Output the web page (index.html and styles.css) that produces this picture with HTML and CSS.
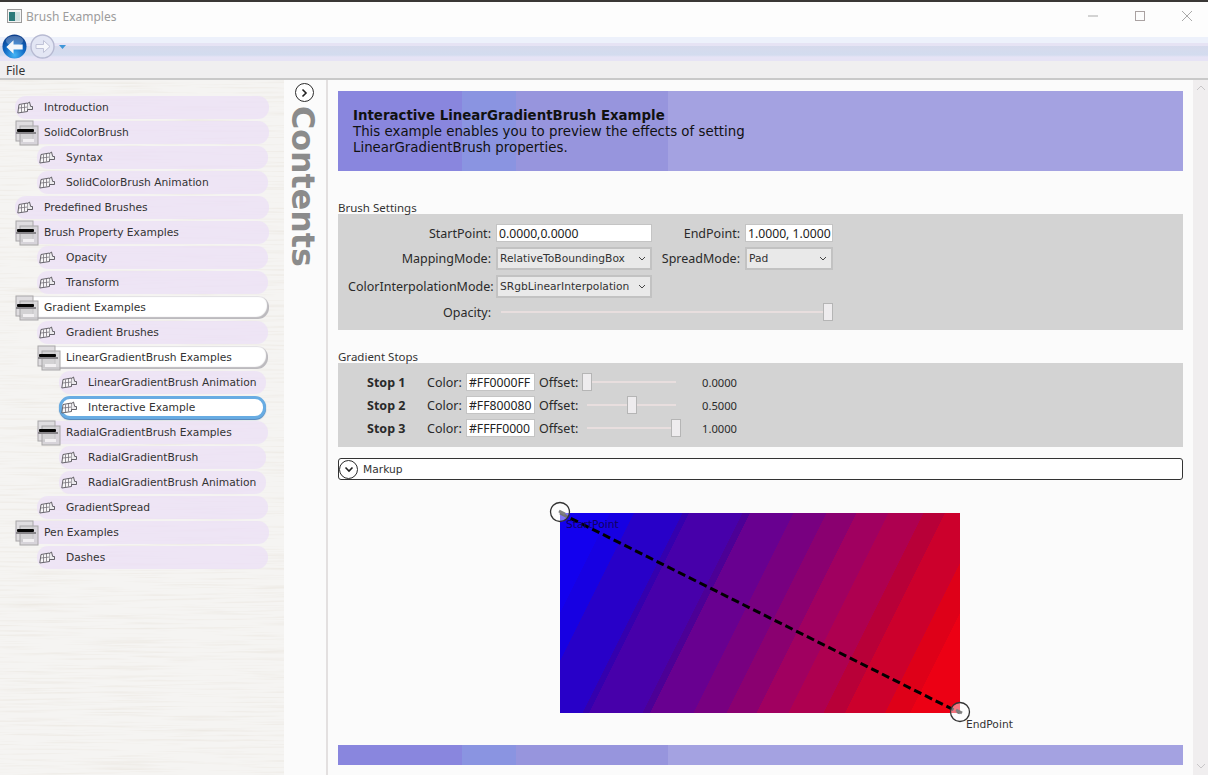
FILE: index.html
```html
<!DOCTYPE html>
<html lang="en">
<head>
    <meta charset="UTF-8">
    <meta name="viewport" content="width=device-width, initial-scale=1.0">
    <title>Brush Examples</title>
    <link rel="stylesheet" href="styles.css">
</head>
<body>
    <svg class="defs" width="0" height="0">
        <defs>
            <symbol id="book" viewBox="0 0 16 13">
                <path d="M2 3.500L10.500 2V10.500L.8 12z" fill="#f7f5f7" stroke="#56535a" stroke-width=".9"/>
                <path d="M4.500 3.500v7.500M7.500 3v7.500M2 7l8.500-1" fill="none" stroke="#77747b" stroke-width=".8"/>
                <path d="M10.500 2.500L12.500 1l1.200 4.500h1.800V8.500h-5" fill="#ecebee" stroke="#56535a" stroke-width=".9"/>
            </symbol>
            <symbol id="folder" viewBox="0 0 24 26">
                <rect x="1" y="1" width="17" height="20" fill="#dfdde0" stroke="#a8a6a8"/>
                <rect x="5" y="6" width="18" height="19" fill="#cfcdd0" fill-opacity=".75" stroke="#a8a6a8"/>
                <rect x="8" y="19" width="11" height="3" fill="#f2f0f2"/>
                <rect x="2" y="9" width="17" height="3" rx="1" fill="#050505"/>
                <rect x="1" y="12" width="20" height="2" fill="#88868a"/>
            </symbol>
        </defs>
    </svg>

    <header class="titlebar">
        <svg class="app-icon" width="15" height="14" viewBox="0 0 15 14">
            <rect x=".5" y=".5" width="14" height="13" fill="#f4f4f4" stroke="#9a9a9a"/>
            <rect x="2" y="3" width="6" height="9" fill="#2b7a7a"/>
            <rect x="8" y="3" width="5" height="9" fill="#cfe0e0"/>
        </svg>
        <span class="app-title">Brush Examples</span>
        <div class="window-buttons">
            <svg width="12" height="12" viewBox="0 0 12 12"><path d="M1 6h10" stroke="#a9a9a9"/></svg>
            <svg width="12" height="12" viewBox="0 0 12 12"><rect x="1.500" y="1.500" width="9" height="9" fill="none" stroke="#aaa2a2"/></svg>
            <svg width="12" height="12" viewBox="0 0 12 12"><path d="M1 1l10 10M11 1L1 11" stroke="#a9a9a9"/></svg>
        </div>
    </header>

    <nav class="navbar">
        <button class="nav-btn nav-back">
            <svg width="25" height="25" viewBox="0 0 26 26">
                <defs>
                    <radialGradient id="backFill" cx=".5" cy=".85" r=".8">
                        <stop offset="0" stop-color="#45b6f6"/>
                        <stop offset=".55" stop-color="#0f68c4"/>
                        <stop offset="1" stop-color="#0d3f8c"/>
                    </radialGradient>
                </defs>
                <circle cx="13" cy="13" r="12.500" fill="url(#backFill)"/>
                <ellipse cx="13" cy="7" rx="9" ry="5" fill="#fff" fill-opacity=".25"/>
                <path d="M4.500 13.500L12 6.500v4.500h9.500v5H12v4.500z" fill="#f6f7fa"/>
            </svg>
        </button>
        <button class="nav-btn nav-forward">
            <svg width="25" height="25" viewBox="0 0 25 25">
                <circle cx="12.500" cy="12.500" r="11.500" fill="#e3e6f4" stroke="#b7bad2" stroke-width="1.400"/>
                <path d="M20 12.500l-6.500-6v4H6v4h7.500v4z" fill="#f6f7fb" stroke="#c0c3d8"/>
            </svg>
        </button>
        <svg class="nav-drop" width="7" height="4" viewBox="0 0 7 4"><path d="M0 0h7L3.500 4z" fill="#3f97d8"/></svg>
    </nav>

    <div class="menubar">File</div>

    <main class="workspace">
        <aside class="sidebar">
            <svg class="grain" width="284" height="695">
                <filter id="grainFilter" x="0" y="0" width="100%" height="100%">
                    <feTurbulence type="fractalNoise" baseFrequency="0.012 0.42" numOctaves="3" seed="11"/>
                    <feColorMatrix values="0 0 0 0 .80  0 0 0 0 .76  0 0 0 0 .70  1.300 0 0 0 -.62"/>
                </filter>
                <rect width="284" height="695" filter="url(#grainFilter)"/>
            </svg>
            <ul class="tree">
                <li class="node"><svg class="ico-book"><use href="#book"/></svg>Introduction</li>
                <li class="node"><svg class="ico-folder"><use href="#folder"/></svg>SolidColorBrush</li>
                <li class="node lvl1"><svg class="ico-book"><use href="#book"/></svg>Syntax</li>
                <li class="node lvl1"><svg class="ico-book"><use href="#book"/></svg>SolidColorBrush Animation</li>
                <li class="node"><svg class="ico-book"><use href="#book"/></svg>Predefined Brushes</li>
                <li class="node"><svg class="ico-folder"><use href="#folder"/></svg>Brush Property Examples</li>
                <li class="node lvl1"><svg class="ico-book"><use href="#book"/></svg>Opacity</li>
                <li class="node lvl1"><svg class="ico-book"><use href="#book"/></svg>Transform</li>
                <li class="node open"><svg class="ico-folder"><use href="#folder"/></svg>Gradient Examples</li>
                <li class="node lvl1"><svg class="ico-book"><use href="#book"/></svg>Gradient Brushes</li>
                <li class="node lvl1 open"><svg class="ico-folder"><use href="#folder"/></svg>LinearGradientBrush Examples</li>
                <li class="node lvl2"><svg class="ico-book"><use href="#book"/></svg>LinearGradientBrush Animation</li>
                <li class="node lvl2 selected"><svg class="ico-book"><use href="#book"/></svg>Interactive Example</li>
                <li class="node lvl1"><svg class="ico-folder"><use href="#folder"/></svg>RadialGradientBrush Examples</li>
                <li class="node lvl2"><svg class="ico-book"><use href="#book"/></svg>RadialGradientBrush</li>
                <li class="node lvl2"><svg class="ico-book"><use href="#book"/></svg>RadialGradientBrush Animation</li>
                <li class="node lvl1"><svg class="ico-book"><use href="#book"/></svg>GradientSpread</li>
                <li class="node"><svg class="ico-folder"><use href="#folder"/></svg>Pen Examples</li>
                <li class="node lvl1"><svg class="ico-book"><use href="#book"/></svg>Dashes</li>
            </ul>
        </aside>

        <div class="contents-strip">
            <button class="round-btn">
                <svg width="10" height="10" viewBox="0 0 10 10"><path d="M3.500 1.500L7 5L3.500 8.500" fill="none" stroke="#222" stroke-width="1.600"/></svg>
            </button>
            <div class="contents-label">Contents</div>
        </div>

        <section class="content">
            <div class="banner">
                <h1>Interactive LinearGradientBrush Example</h1>
                <p>This example enables you to preview the effects of setting<br>LinearGradientBrush properties.</p>
            </div>

            <h2 class="group-title first">Brush Settings</h2>
            <div class="panel settings">
                <label>StartPoint:</label>
                <input class="field" type="text" value="0.0000,0.0000">
                <label>EndPoint:</label>
                <input class="field" type="text" value="1.0000, 1.0000">

                <label>MappingMode:</label>
                <div class="combo">RelativeToBoundingBox<svg width="8" height="5" viewBox="0 0 8 5"><path d="M1 1l3 3 3-3" fill="none" stroke="#444"/></svg></div>
                <label>SpreadMode:</label>
                <div class="combo">Pad<svg width="8" height="5" viewBox="0 0 8 5"><path d="M1 1l3 3 3-3" fill="none" stroke="#444"/></svg></div>

                <label>ColorInterpolationMode:</label>
                <div class="combo">SRgbLinearInterpolation<svg width="8" height="5" viewBox="0 0 8 5"><path d="M1 1l3 3 3-3" fill="none" stroke="#444"/></svg></div>
                <span></span>
                <span></span>

                <label>Opacity:</label>
                <input class="slider opacity" type="range" min="0" max="1" step="0.01" value="1">
            </div>

            <h2 class="group-title second">Gradient Stops</h2>
            <div class="panel stops">
                <b>Stop 1</b><span>Color:</span><input class="field" type="text" value="#FF0000FF"><span>Offset:</span>
                <input class="slider" type="range" min="0" max="1" step="0.01" value="0"><span class="num">0.0000</span>
                <b>Stop 2</b><span>Color:</span><input class="field" type="text" value="#FF800080"><span>Offset:</span>
                <input class="slider" type="range" min="0" max="1" step="0.01" value="0.5"><span class="num">0.5000</span>
                <b>Stop 3</b><span>Color:</span><input class="field" type="text" value="#FFFF0000"><span>Offset:</span>
                <input class="slider" type="range" min="0" max="1" step="0.01" value="1"><span class="num">1.0000</span>
            </div>

            <div class="expander">
                <button class="round-btn">
                    <svg width="10" height="10" viewBox="0 0 10 10"><path d="M1.500 3.500L5 7L8.500 3.500" fill="none" stroke="#222" stroke-width="1.600"/></svg>
                </button>
                <span>Markup</span>
            </div>

            <div class="canvas">
                <div class="gradient-rect"></div>
                <svg class="overlay" width="844" height="265">
                    <line x1="222" y1="33" x2="622" y2="233" stroke="#000" stroke-width="3" stroke-dasharray="8 4"/>
                    <circle cx="222" cy="32" r="9.500" fill="#fff" fill-opacity=".45" stroke="#333" stroke-width="1.300"/>
                    <circle cx="622" cy="232" r="9.500" fill="#fff" fill-opacity=".45" stroke="#333" stroke-width="1.300"/>
                    <line x1="221" y1="31" x2="227" y2="34" stroke="#808080" stroke-width="3"/>
                    <line x1="618" y1="230" x2="624" y2="233" stroke="#808080" stroke-width="3"/>
                </svg>
                <span class="point-label start">StartPoint</span>
                <span class="point-label end">EndPoint</span>
            </div>

            <div class="banner footer-bar"></div>
        </section>

        <div class="scrollbar">
            <svg width="10" height="6" viewBox="0 0 10 6"><path d="M1 5l4-4 4 4" fill="none" stroke="#c9c7c9"/></svg>
            <svg width="10" height="6" viewBox="0 0 10 6"><path d="M1 1l4 4 4-4" fill="none" stroke="#c9c7c9"/></svg>
        </div>
    </main>
</body>
</html>
```

FILE: styles.css
```css
* {
    box-sizing: border-box;
}
html, body {
    height: 100%;
}
body {
    margin: 0;
    display: flex;
    flex-direction: column;
    height: 775px;
    overflow: hidden;
    background-color: #fbfbfb;
    font-family: "Noto Sans", sans-serif;
    font-size: 12px;
    color: #222;
}
button {
    padding: 0;
    border: none;
    background: none;
}
.defs {
    position: absolute;
}

/* title bar */
.titlebar {
    height: 37px;
    flex: none;
    display: flex;
    align-items: center;
    padding: 0 15px 7px 7px;
    background-color: #fdfdfd;
    border-top: 2px solid #3a3836;
}
.app-title {
    margin-left: 4px;
    color: #9c9c9c;
}
.window-buttons {
    margin-left: auto;
    display: flex;
    gap: 35px;
}

/* back and forward */
.navbar {
    height: 24px;
    flex: none;
    display: flex;
    align-items: center;
    padding-left: 2px;
    background: linear-gradient(#edf1fb 0, #edf1fb 6px, #e6e3f4 6px, #e6e3f4 9px, #d6daec 9px, #d3dcef 18px, #e6e3f5 20px);
}
.nav-btn {
    display: flex;
    margin-top: -5px;
}
.nav-back {
    margin-right: 3px;
}
.nav-drop {
    margin-left: 4px;
    margin-top: -4px;
}
.menubar {
    height: 19px;
    flex: none;
    padding: 0 6px;
    line-height: 19px;
    background-color: #f0eff0;
    border-bottom: 2px solid #c9c9c9;
    color: #333;
}

.workspace {
    flex: 1;
    display: flex;
    min-height: 0;
}

/* navigation tree */
.sidebar {
    width: 284px;
    flex: none;
    position: relative;
    padding: 16px 15px 0 15px;
    background-color: #f5f4f2;
}
.grain {
    position: absolute;
    left: 0;
    top: 0;
}
.tree {
    position: relative;
    list-style: none;
    margin: 0;
    padding: 0;
    display: flex;
    flex-direction: column;
    gap: 2px;
}
.node {
    height: 23px;
    display: flex;
    align-items: center;
    padding-left: 2px;
    border-radius: 11px;
    background-color: rgba(236, 224, 246, 0.78);
    font-family: "DejaVu Sans", sans-serif;
    font-size: 10.700px;
    color: #333;
}
.lvl1 {
    margin-left: 22px;
    margin-right: 1px;
}
.lvl2 {
    margin-left: 44px;
    margin-right: 3px;
}
.ico-book {
    width: 16px;
    height: 13px;
    margin-right: 11px;
    flex: none;
}
.ico-folder {
    width: 24px;
    height: 26px;
    margin: -2px 5px -2px -2px;
    flex: none;
}
.open {
    background-color: #fff;
    box-shadow: inset -2px -2px 1px #bcbabe, inset 0 1px 1px #e2e0e3;
}
.selected {
    background-color: #fff;
    border: 3px solid #68ace3;
    box-shadow: 0 1px 1px #4a80b8;
    padding-left: 0;
}
.selected .ico-book {
    margin-left: -1px;
}

/* collapsed contents column */
.contents-strip {
    width: 44px;
    flex: none;
    display: flex;
    flex-direction: column;
    align-items: center;
    padding-top: 3px;
    padding-right: 2px;
    background-color: #fbfbfb;
    border-right: 2px solid #e3e0e0;
}
.round-btn {
    width: 19px;
    height: 19px;
    flex: none;
    display: flex;
    align-items: center;
    justify-content: center;
    border: 1.500px solid #2b2b2b;
    border-radius: 50%;
    background-color: #fff;
}
.contents-label {
    writing-mode: vertical-rl;
    margin-top: 4px;
    margin-right: 3px;
    font-family: "DejaVu Sans", sans-serif;
    font-weight: bold;
    font-size: 31.700px;
    line-height: 32px;
    color: #8b8b8b;
}

/* main column */
.content {
    width: 865px;
    flex: none;
    padding: 11px 10px 0 10px;
}
.banner {
    height: 80px;
    padding: 17px 15px 0 15px;
    background: linear-gradient(90deg, #8986de 0, #8986de 124px, #8a94e1 124px, #8a94e1 178px, #9795dd 178px, #9795dd 330px, #a4a2e1 330px);
    font-family: "DejaVu Sans", sans-serif;
    font-size: 13.350px;
    line-height: 16px;
    color: #111;
}
.banner h1 {
    margin: 0;
    font-size: 13.350px;
    line-height: 16px;
    font-weight: bold;
}
.banner p {
    margin: 0;
}
.group-title {
    margin: 0;
    font-size: 11.500px;
    font-weight: normal;
    line-height: 12px;
    color: #333;
}
.group-title.first {
    margin-top: 31px;
}
.group-title.second {
    margin-top: 21px;
}
.panel {
    background-color: #d3d3d3;
    font-size: 12.500px;
    color: #2a2a2a;
}
.settings {
    height: 116px;
    display: grid;
    grid-template-columns: 143px 156px 83px 88px;
    grid-template-rows: 18px 23px 23px 18px;
    column-gap: 5px;
    row-gap: 5px;
    padding: 10px 0 0 10px;
    align-items: center;
}
.settings label {
    text-align: right;
    white-space: nowrap;
}
.field {
    width: 100%;
    height: 18px;
    padding: 0 0 0 2px;
    border: 1px solid #c4c4c4;
    background-color: #fff;
    font-family: "Noto Sans", sans-serif;
    font-size: 12.200px;
    color: #222;
}
.combo {
    height: 23px;
    display: flex;
    align-items: center;
    justify-content: space-between;
    padding: 0 4px 0 2px;
    border: 2px solid #c2c2c2;
    background-color: #e9e9e9;
    font-family: "DejaVu Sans", sans-serif;
    font-size: 10.700px;
    color: #333;
}
.slider {
    -webkit-appearance: none;
    appearance: none;
    width: 100%;
    height: 18px;
    margin: 0;
    background: none;
}
.slider::-webkit-slider-runnable-track {
    height: 2px;
    background: linear-gradient(90deg, transparent 5px, #e8dede 5px, #e8dede calc(100% - 5px), transparent calc(100% - 5px));
}
.slider::-webkit-slider-thumb {
    -webkit-appearance: none;
    width: 10px;
    height: 18px;
    margin-top: -8px;
    border: 1px solid #b5b5b5;
    background-color: #eeecee;
}
.opacity {
    grid-column: span 3;
    width: 337px;
}
.stops {
    height: 84px;
    display: grid;
    grid-template-columns: 56px 35px 69px 39px 99px 52px;
    grid-auto-rows: 18px;
    row-gap: 5px;
    column-gap: 4px;
    padding: 10px 0 0 29px;
    align-items: center;
}
.stops b {
    font-weight: bold;
}
.stops .num {
    text-align: right;
    font-size: 11.200px;
}
.expander {
    height: 22px;
    margin-top: 11px;
    display: flex;
    align-items: center;
    gap: 5px;
    border: 1px solid #333;
    border-radius: 3px;
    background-color: #fff;
    font-family: "DejaVu Sans", sans-serif;
    font-size: 10.700px;
    color: #333;
}

/* free canvas with the gradient */
.canvas {
    position: relative;
    height: 265px;
}
.gradient-rect {
    position: absolute;
    left: 222px;
    top: 33px;
    width: 400px;
    height: 200px;
    background: linear-gradient(116.57deg,
        #1300ee 0, #1300ee 10%, #1700e2 10%, #1700e2 14.8%,
        #2800c8 14.8%, #2800c8 24.5%, #3400ae 24.5%, #3400ae 25.8%,
        #4700aa 25.8%, #4700aa 36.5%, #4c0096 36.5%, #4c0096 38%,
        #680090 38%, #680090 46.7%, #780080 46.7%, #780080 53.3%,
        #8a0070 53.3%, #8a0070 59.3%, #a00060 59.3%, #a00060 65.7%,
        #ae0050 65.7%, #ae0050 72.7%, #b80038 72.7%, #b80038 77%,
        #cc002c 77%, #cc002c 85%, #de0018 85%, #de0018 90%,
        #ec0014 90%, #ec0014 100%);
}
.overlay {
    position: absolute;
    left: 0;
    top: 0;
}
.point-label {
    position: absolute;
    font-family: "DejaVu Sans", sans-serif;
    font-size: 10.700px;
    line-height: 14px;
    color: #333;
}
.point-label.start {
    left: 228px;
    top: 38px;
    color: #100060;
}
.point-label.end {
    left: 628px;
    top: 238px;
}
.footer-bar {
    height: 20px;
}

.scrollbar {
    flex: 1;
    display: flex;
    flex-direction: column;
    align-items: center;
    justify-content: space-between;
    padding: 5px 0 6px;
    background-color: #f0eeef;
}
```
